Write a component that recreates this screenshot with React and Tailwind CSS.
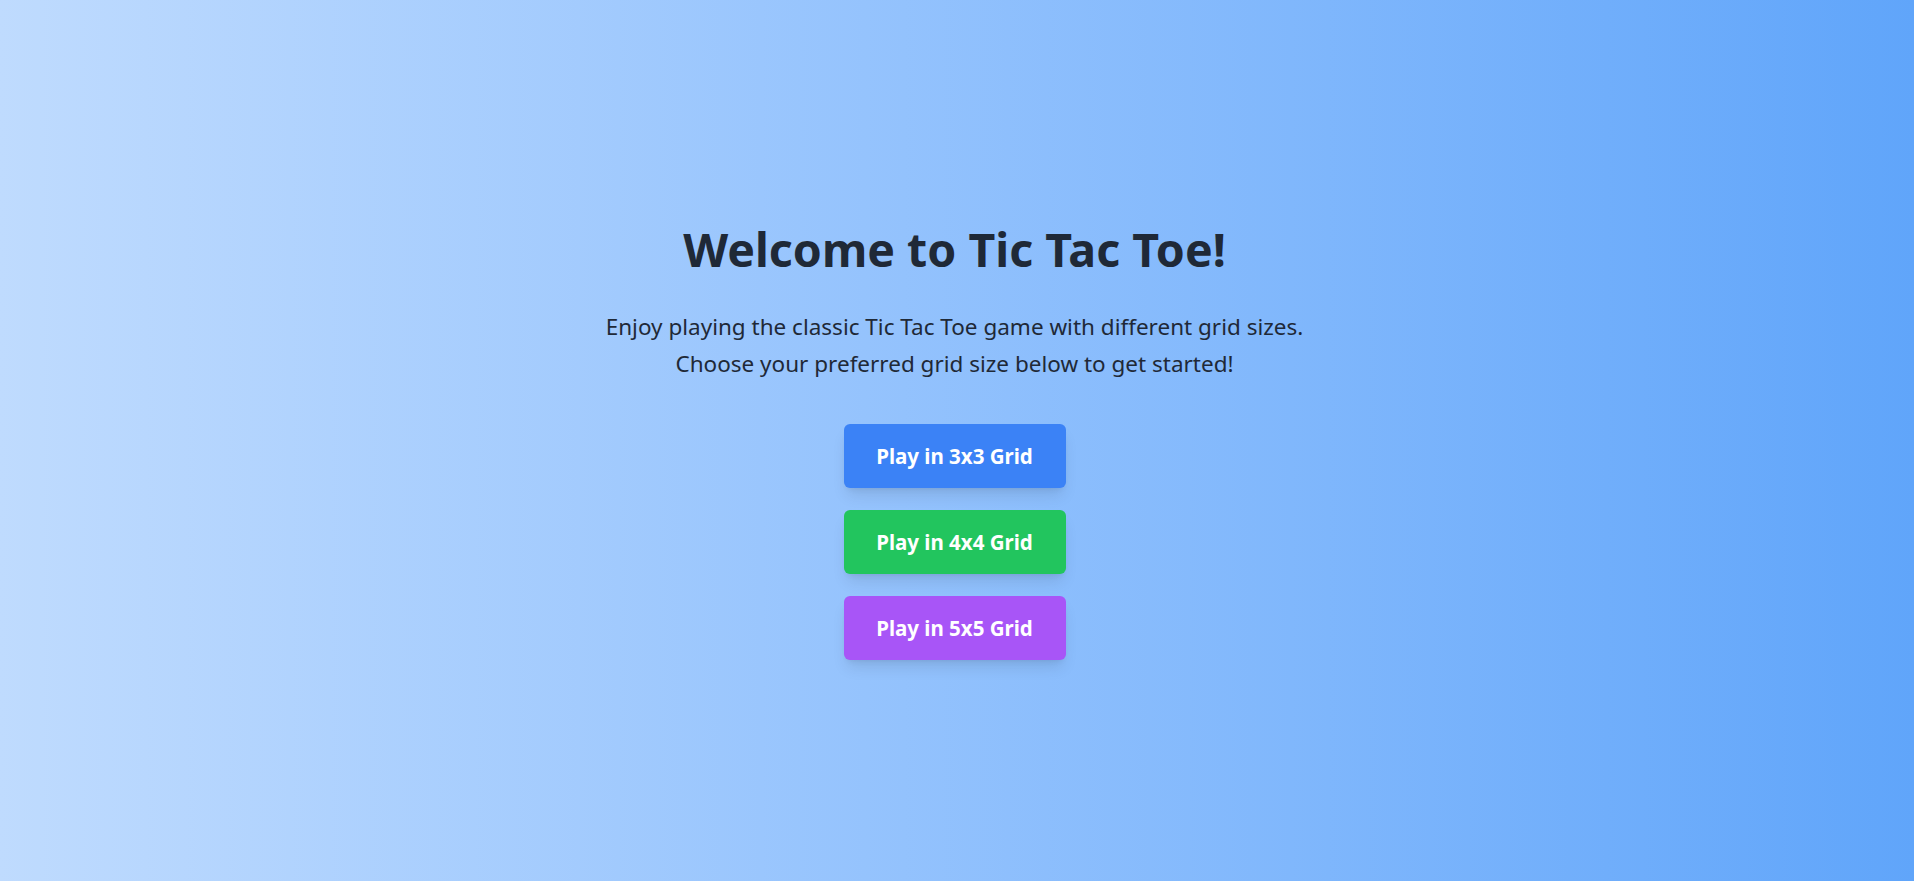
import React from "react";

export default function App() {
  return (
    <div
      className="min-h-screen w-full flex items-center justify-center bg-gradient-to-r from-[#bfdbfe] to-[#60a5fa]"
      style={{ fontFamily: '"Segoe UI", "Noto Sans", "Open Sans", sans-serif' }}
    >
      <div className="flex flex-col items-center text-center pt-[5px] mr-[5px]">
        <h1 className="text-[46.5px] leading-[46px] font-bold text-[#1f2937] mb-9">Welcome to Tic Tac Toe!</h1>
        <p className="text-[22.5px] text-[#1f2937] leading-[37px] mb-[42px]">
          Enjoy playing the classic Tic Tac Toe game with different grid sizes.
          <br />
          Choose your preferred grid size below to get started!
        </p>
        <div className="flex flex-col gap-[22px]">
          <button className="w-[222px] h-[64px] rounded-md bg-[#3b82f6] text-white text-[20.5px] font-bold shadow-lg">
            Play in 3x3 Grid
          </button>
          <button className="w-[222px] h-[64px] rounded-md bg-[#22c55e] text-white text-[20.5px] font-bold shadow-lg">
            Play in 4x4 Grid
          </button>
          <button className="w-[222px] h-[64px] rounded-md bg-[#a855f7] text-white text-[20.5px] font-bold shadow-lg">
            Play in 5x5 Grid
          </button>
        </div>
      </div>
    </div>
  );
}
